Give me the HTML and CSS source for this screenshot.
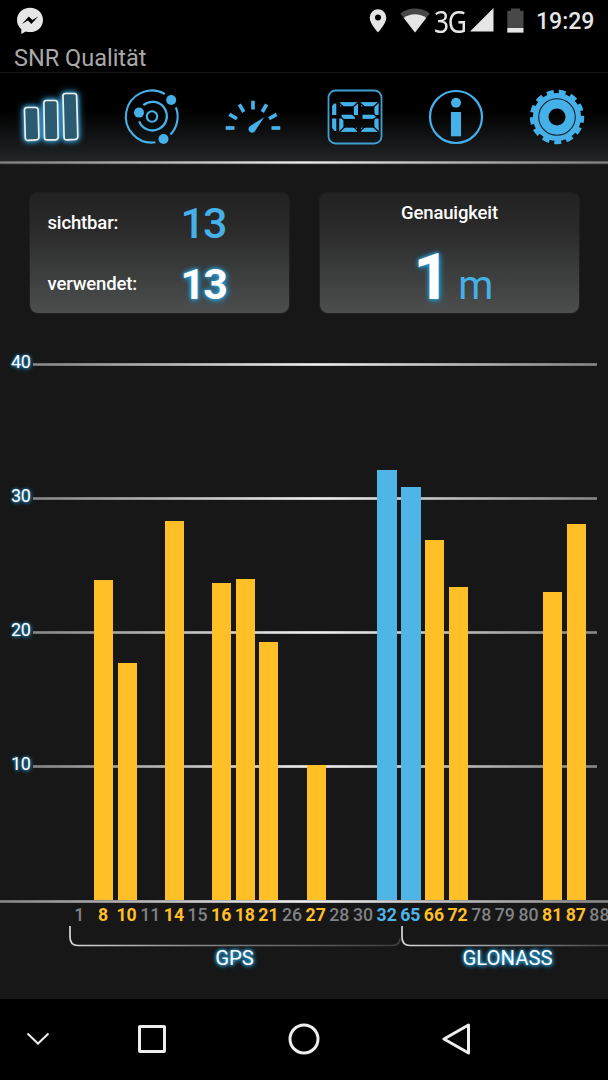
FILE: index.html
```html
<!DOCTYPE html>
<html lang="de">
<head>
    <meta charset="UTF-8">
    <meta name="viewport" content="width=device-width, initial-scale=1.0">
    <title>SNR Qualität</title>
    <link rel="stylesheet" href="styles.css">
</head>
<body>
    <div class="statusbar">
        <svg class="messenger" width="28" height="28" viewBox="0 0 28 28">
            <path fill="#e6e6e6" d="M14 .7C6.600.7 1 6 1 13c0 3.700 1.500 6.800 4.300 9.200V27l4.500-2.500c1.300.4 2.700.6 4.200.6 7.400 0 13-5.300 13-12.200S21.400.7 14 .7z"/>
            <path fill="#000" d="M6 17l6.800-7.400 3.600 3.500 5.800-3.500-6.800 7.300-3.500-3.500z"/>
        </svg>
        <svg class="pin" width="18" height="24" viewBox="0 0 18 24">
            <path fill="#e6e6e6" fill-rule="evenodd" d="M9 .3a8.300 8.300 0 0 0-8.300 8.300C.7 14.800 9 23.500 9 23.500s8.300-8.700 8.300-14.900A8.300 8.300 0 0 0 9 .3zm0 5.200a3 3 0 1 1 0 6 3 3 0 0 1 0-6z"/>
        </svg>
        <svg class="wifi" width="30" height="25" viewBox="0 0 30 25">
            <path fill="#484848" d="M15 24.500L.3 5.500C4.500 2.200 9.500.5 15 .5s10.500 1.700 14.700 5z"/>
            <path fill="#e6e6e6" d="M15 24.500L3.800 10C7 7.600 10.800 6.300 15 6.300S23 7.600 26.200 10z"/>
        </svg>
        <span class="network">3G</span>
        <svg class="signal" width="24" height="24" viewBox="0 0 24 24">
            <path fill="#e6e6e6" d="M0 23.500h23.500V0z"/>
        </svg>
        <svg class="battery" width="17" height="25" viewBox="0 0 17 25">
            <path fill="#484848" d="M4 .5h9v2.300h3.500V20H.3V2.800H4z"/>
            <path fill="#e6e6e6" d="M.3 20h16.200v4.600H.3z"/>
        </svg>
        <span class="clock">19:29</span>
    </div>
    <div class="titlebar">SNR Qualität</div>

    <div class="tabs">
        <div class="tab active">
            <svg width="64" height="64" viewBox="0 0 64 64">
                <g fill="#2b5b70" stroke="#eee" stroke-width="1.700" stroke-linejoin="round">
                    <path d="M8 22.500h8.600q2.400 0 2.500 2.400l.8 27q.1 2.800-2.500 2.900l-8.600.5q-2.400.1-2.500-2.400L5.500 25q0-2.500 2.500-2.500z"/>
                    <path d="M27.400 15.500H36q2.400 0 2.500 2.400l.6 34.200q0 2.600-2.500 2.700h-8.600q-2.500 0-2.500-2.400l-.6-34.400q0-2.500 2.500-2.500z"/>
                    <path d="M46.500 8.500h8.600q2.400 0 2.500 2.400l1.200 40.700q0 2.500-2.400 2.700l-8.800.5q-2.400.1-2.500-2.400L44 11q0-2.500 2.500-2.500z"/>
                </g>
            </svg>
        </div>
        <div class="tab">
            <svg width="64" height="64" viewBox="0 0 64 64">
                <g fill="none" stroke="#45b1e8" stroke-width="2.100">
                    <path d="M35.400 57.300A26 26 0 1 1 44.800 9"/>
                    <path d="M55.900 22.300A26 26 0 0 1 50.500 49.500"/>
                    <path d="M23.300 20.200A14.300 14.300 0 1 1 19.200 36.300" stroke-width="2.300"/>
                    <circle cx="32" cy="31.500" r="5.200"/>
                </g>
                <g fill="#45b1e8">
                    <circle cx="51.200" cy="15" r="5"/>
                    <circle cx="19" cy="27.600" r="5"/>
                    <circle cx="43.500" cy="54" r="5"/>
                </g>
            </svg>
        </div>
        <div class="tab">
            <svg width="64" height="64" viewBox="0 0 64 64">
                <g stroke="#45b1e8" stroke-width="3.700">
                    <path d="M4.700 43h8.800"/>
                    <path d="M4.700 43h8.800" transform="rotate(30 32 43)"/>
                    <path d="M4.700 43h8.800" transform="rotate(60 32 43)"/>
                    <path d="M4.700 43h8.800" transform="rotate(90 32 43)"/>
                    <path d="M4.700 43h8.800" transform="rotate(120 32 43)"/>
                    <path d="M4.700 43h8.800" transform="rotate(150 32 43)"/>
                    <path d="M4.700 43h8.800" transform="rotate(180 32 43)"/>
                </g>
                <path fill="#45b1e8" d="M28.900 41.200L43.200 32.200 34.500 45.200A3.600 3.600 0 1 1 28.900 41.200z"/>
            </svg>
        </div>
        <div class="tab">
            <svg width="64" height="64" viewBox="0 0 64 64">
                <rect x="5.500" y="5.500" width="53" height="53" rx="7" fill="none" stroke="#3f9fd0" stroke-width="1.800"/>
                <!-- seven segment display -->
                <g stroke="#45b1e8" stroke-width="4.200">
                    <line x1="11.200" y1="18.500" x2="11.200" y2="30"/>
                    <line x1="11.200" y1="33.500" x2="11.200" y2="46"/>
                    <line x1="17" y1="19.200" x2="34.500" y2="19.200"/>
                    <line x1="32.900" y1="18" x2="32.900" y2="30"/>
                    <line x1="18.500" y1="31.800" x2="32" y2="31.800"/>
                    <line x1="18.300" y1="33.500" x2="18.300" y2="46.500"/>
                    <line x1="17" y1="44.800" x2="34" y2="44.800"/>
                    <line x1="38" y1="19.200" x2="55.500" y2="19.200"/>
                    <line x1="53.500" y1="18" x2="53.500" y2="30"/>
                    <line x1="39.500" y1="31.800" x2="53" y2="31.800"/>
                    <line x1="53.500" y1="33.500" x2="53.500" y2="46"/>
                    <line x1="38" y1="44.800" x2="55.500" y2="44.800"/>
                </g>
                <!-- gaps between the segments -->
                <g stroke="#070708" stroke-width="1.300">
                    <line x1="8" y1="21" x2="12" y2="16.500"/>
                    <line x1="8" y1="43" x2="12.500" y2="48"/>
                    <line x1="15.500" y1="17.500" x2="21" y2="22.500"/>
                    <line x1="29.500" y1="22.500" x2="36" y2="16.500"/>
                    <line x1="28.500" y1="28.500" x2="35.500" y2="34.500"/>
                    <line x1="16" y1="30" x2="22" y2="36"/>
                    <line x1="15.500" y1="48" x2="22" y2="41.500"/>
                    <line x1="30.500" y1="41.500" x2="36" y2="47"/>
                    <line x1="36.500" y1="17.500" x2="42" y2="22.500"/>
                    <line x1="50" y1="22.500" x2="56.500" y2="16.500"/>
                    <line x1="49.500" y1="28" x2="56" y2="33.500"/>
                    <line x1="49.500" y1="35" x2="56" y2="30.500"/>
                    <line x1="50" y1="41.500" x2="56.500" y2="47.500"/>
                    <line x1="36.500" y1="46.500" x2="42" y2="41.500"/>
                </g>
            </svg>
        </div>
        <div class="tab">
            <svg width="64" height="64" viewBox="0 0 64 64">
                <circle cx="32" cy="32" r="26" fill="none" stroke="#45b1e8" stroke-width="2.200"/>
                <circle cx="32" cy="17.700" r="5" fill="#45b1e8"/>
                <rect x="27" y="27" width="10" height="24.300" fill="#45b1e8"/>
            </svg>
        </div>
        <div class="tab">
            <svg width="64" height="64" viewBox="0 0 64 64">
                <circle cx="32" cy="32" r="25.200" fill="none" stroke="#45b1e8" stroke-width="4" pathLength="130" stroke-dasharray="5.800 4.200" transform="rotate(-86 32 32)"/>
                <circle cx="32" cy="32" r="16.300" fill="none" stroke="#45b1e8" stroke-width="15.600"/>
                <circle cx="32" cy="32" r="18.300" fill="none" stroke="#10212b" stroke-width="1.100"/>
            </svg>
        </div>
    </div>

    <div class="cards">
        <div class="card counts">
            <span class="label">sichtbar:</span><span class="count">13</span>
            <span class="label">verwendet:</span><span class="count glow">13</span>
        </div>
        <div class="card accuracy">
            <div class="label">Genauigkeit</div>
            <div class="distance"><span class="meters">1</span><span class="unit">m</span></div>
        </div>
    </div>

    <div class="plot">
        <div class="scale">
            <div class="step"><span>40</span><i></i></div>
            <div class="step"><span>30</span><i></i></div>
            <div class="step"><span>20</span><i></i></div>
            <div class="step"><span>10</span><i></i></div>
        </div>
        <div class="bars">
            <div class="col"></div>
            <div class="col"><div class="bar" style="height: 320px"></div></div>
            <div class="col"><div class="bar" style="height: 237px"></div></div>
            <div class="col"></div>
            <div class="col"><div class="bar" style="height: 379px"></div></div>
            <div class="col"></div>
            <div class="col"><div class="bar" style="height: 317px"></div></div>
            <div class="col"><div class="bar" style="height: 321px"></div></div>
            <div class="col"><div class="bar" style="height: 258px"></div></div>
            <div class="col"></div>
            <div class="col"><div class="bar" style="height: 135px"></div></div>
            <div class="col"></div>
            <div class="col"></div>
            <div class="col"><div class="bar blue" style="height: 430px"></div></div>
            <div class="col"><div class="bar blue" style="height: 413.500px"></div></div>
            <div class="col"><div class="bar" style="height: 360px"></div></div>
            <div class="col"><div class="bar" style="height: 313.500px"></div></div>
            <div class="col"></div>
            <div class="col"></div>
            <div class="col"></div>
            <div class="col"><div class="bar" style="height: 308px"></div></div>
            <div class="col"><div class="bar" style="height: 376.500px"></div></div>
            <div class="col"></div>
        </div>
    </div>
    <div class="baseline"></div>
    <div class="ids">
        <span>1</span>
        <span class="used">8</span>
        <span class="used">10</span>
        <span>11</span>
        <span class="used">14</span>
        <span>15</span>
        <span class="used">16</span>
        <span class="used">18</span>
        <span class="used">21</span>
        <span>26</span>
        <span class="used">27</span>
        <span>28</span>
        <span>30</span>
        <span class="best">32</span>
        <span class="best">65</span>
        <span class="used">66</span>
        <span class="used">72</span>
        <span>78</span>
        <span>79</span>
        <span>80</span>
        <span class="used">81</span>
        <span class="used">87</span>
        <span>88</span>
    </div>
    <div class="systems">
        <div class="system gps">
            <svg width="332" height="22" viewBox="0 0 332 22">
                <defs>
                    <linearGradient id="fade1" gradientUnits="userSpaceOnUse" x1="0" y1="0" x2="332" y2="0">
                        <stop offset="0" stop-color="#d8dadb"/>
                        <stop offset=".4" stop-color="#858788"/>
                        <stop offset="1" stop-color="#3c3e3f"/>
                    </linearGradient>
                </defs>
                <path d="M1 0v11q0 8.500 8 8.500h314q8 0 8-7" fill="none" stroke="url(#fade1)" stroke-width="1.700"/>
            </svg>
            <span>GPS</span>
        </div>
        <div class="system glonass">
            <svg width="214" height="22" viewBox="0 0 214 22">
                <defs>
                    <linearGradient id="fade2" gradientUnits="userSpaceOnUse" x1="0" y1="0" x2="214" y2="0">
                        <stop offset="0" stop-color="#d8dadb"/>
                        <stop offset=".4" stop-color="#a0a2a3"/>
                        <stop offset="1" stop-color="#3c3e3f"/>
                    </linearGradient>
                </defs>
                <path d="M1 0v11q0 8.500 8 8.500h196q8 0 8-7" fill="none" stroke="url(#fade2)" stroke-width="1.700"/>
            </svg>
            <span>GLONASS</span>
        </div>
    </div>

    <div class="navbar">
        <svg class="hide" width="24" height="14" viewBox="0 0 24 14"><path d="M1.500 1.500L12 11.500l10.500-10" stroke-width="2"/></svg>
        <svg width="32" height="32" viewBox="0 0 32 32"><rect x="3.500" y="3.500" width="25" height="25" rx=".5"/></svg>
        <svg width="32" height="32" viewBox="0 0 32 32"><circle cx="16" cy="16" r="14"/></svg>
        <svg width="32" height="32" viewBox="0 0 32 32"><path d="M28.500 2v28L4 16z" stroke-linejoin="round"/></svg>
    </div>
</body>
</html>
```
FILE: styles.css
```css
* {
    box-sizing: border-box;
}
body {
    margin: 0;
    width: 608px;
    height: 1080px;
    overflow: hidden;
    background: #171717;
    color: #fff;
    font-family: Roboto, "Liberation Sans", sans-serif;
    display: flex;
    flex-direction: column;
}
svg {
    display: block;
    flex: none;
}

/* system status bar */
.statusbar {
    height: 42px;
    padding: 0 12px 0 16px;
    background: #000;
    color: #e6e6e6;
    display: flex;
    align-items: center;
}
.messenger {
    margin-right: auto;
}
.pin,
.wifi {
    margin-top: -1px;
}
.wifi {
    margin-left: 13px;
}
.network {
    font-family: "Noto Sans", sans-serif;
    font-size: 31px;
    line-height: 42px;
    letter-spacing: -1.500px;
    width: 35px;
    margin: 0 1px 0 4px;
    transform: scaleX(.85);
    transform-origin: left;
}
.signal {
    margin-top: -2px;
}
.battery {
    margin-left: 13px;
    margin-top: -1px;
}
.clock {
    width: 60px;
    margin-left: 12px;
    font-size: 23px;
    font-weight: 500;
    white-space: nowrap;
}
.titlebar {
    height: 30px;
    padding-left: 14px;
    background: #000;
    color: #a9a9a9;
    font-size: 23.500px;
    line-height: 32px;
}

/* tabs */
.tabs {
    height: 93px;
    padding-bottom: 4px;
    display: grid;
    grid-template-columns: repeat(6, 1fr);
    place-items: center;
    border-top: 1px solid #141414;
    background:
        linear-gradient(rgba(0, 0, 0, .45), transparent 40%, transparent 60%, rgba(0, 0, 0, .45)) 0 calc(100% - 1px) / 100% 3px no-repeat,
        linear-gradient(90deg, #808080, #eee 50%, #808080) 0 calc(100% - 1px) / 100% 3px no-repeat,
        linear-gradient(#000 40%, #222426 96%);
}
.tab.active svg {
    overflow: visible;
    filter: drop-shadow(0 0 2px #3fa9dc) drop-shadow(0 0 3px #2f8fc0);
}

/* info cards */
.cards {
    padding: 28px 28px 0 30px;
    height: 185px;
    display: flex;
    gap: 31px;
}
.card {
    width: 259px;
    height: 120px;
    border-radius: 8px;
    background: linear-gradient(#222, #2a2a2a 30%, #4c4e4e);
    box-shadow: 0 0 2px #3c3c3c;
}
.label {
    font-size: 18.500px;
    line-height: 24px;
    letter-spacing: -.15px;
    font-weight: 500;
}
.counts {
    display: grid;
    grid-template-columns: 133px 1fr;
    grid-template-rows: 60px 62px;
    align-items: center;
    padding-left: 17.500px;
}
.count {
    color: #45b1e8;
    font-size: 43px;
    line-height: 48px;
    letter-spacing: -2px;
    font-weight: 500;
}
.count.glow {
    color: #fff;
    font-weight: 700;
    text-shadow: 0 0 3px #2ba0dc, 0 0 5px #2ba0dc, 1px 1px 7px #2588bb;
}
.accuracy {
    padding-top: 8px;
    text-align: center;
}
.distance {
    display: flex;
    justify-content: center;
    align-items: baseline;
    gap: 8px;
    line-height: 70px;
    margin-top: 18px;
    padding-left: 8px;
}
.meters {
    font-size: 64px;
    font-weight: 700;
    text-shadow: 0 0 3px #2ba0dc, 0 0 5px #2ba0dc, 1px 1px 7px #2588bb;
}
.unit {
    color: #45b1e8;
    font-size: 40px;
}

/* chart */
.plot {
    height: 550px;
    display: grid;
}
.scale,
.bars {
    grid-area: 1 / 1;
}
.step {
    height: 134px;
    padding: 0 11px;
    display: flex;
}
.step span {
    width: 22px;
    font-size: 18px;
    line-height: 23px;
    letter-spacing: -.3px;
    text-shadow: 0 0 3px #2ba0dc, 1px 1px 4px #2588bb;
}
.step i {
    flex: 1;
    height: 3px;
    margin-top: 13px;
    background: linear-gradient(rgba(0, 0, 0, .25), transparent 40%, transparent 60%, rgba(0, 0, 0, .25)), linear-gradient(90deg, #858585, #eee 50%, #858585);
}
.bars {
    display: flex;
    align-items: flex-end;
    padding-left: 68px;
    overflow: hidden;
}
.col {
    flex: none;
    width: 23.650px;
    display: flex;
    justify-content: center;
}
.bar {
    width: 19px;
    background: #ffbf27;
}
.bar.blue {
    width: 20.500px;
    background: #4eb5e6;
}
.baseline {
    height: 3px;
    background: linear-gradient(rgba(0, 0, 0, .25), transparent 40%, transparent 60%, rgba(0, 0, 0, .25)), linear-gradient(90deg, #858585, #eee 50%, #858585);
}
.ids {
    height: 23px;
    padding-left: 67.500px;
    display: flex;
    overflow: hidden;
    font-size: 17.700px;
    line-height: 24px;
    font-weight: 500;
    color: #808284;
}
.ids span {
    flex: none;
    width: 23.650px;
    text-align: center;
}
.ids .used {
    color: #ffbf27;
    font-weight: 700;
}
.ids .best {
    color: #4eb5e6;
    font-weight: 700;
}
.systems {
    height: 73px;
    padding-left: 68.500px;
    display: flex;
    overflow: hidden;
}
.system {
    flex: none;
    text-align: center;
    font-size: 20.300px;
    line-height: 21px;
    text-shadow: 0 0 3px #2ba0dc, 0 0 4px #2ba0dc, 1px 1px 5px #2588bb;
}
.gps {
    width: 332px;
}
.glonass {
    width: 214px;
}

/* navigation */
.navbar {
    height: 81px;
    background: #000;
    display: flex;
    align-items: center;
    padding: 0 0 1px 26px;
    gap: 120px;
}
.navbar svg {
    fill: none;
    stroke: #eee;
    stroke-width: 3;
}
.navbar .hide {
    margin-right: -34px;
}
```
